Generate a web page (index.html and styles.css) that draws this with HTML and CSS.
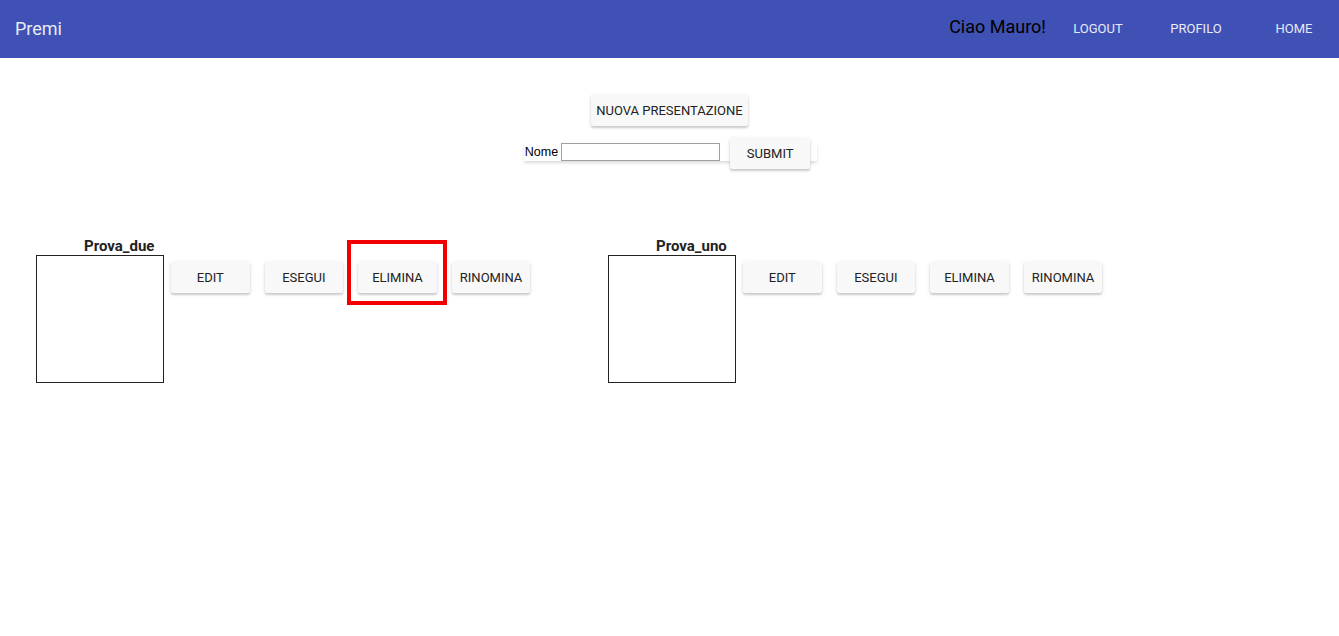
FILE: index.html
```html
<!DOCTYPE html>
<html>
<head>
<meta charset="utf-8">
<link rel="stylesheet" href="styles.css">
</head>
<body>
<header class="topbar">
  <div class="brand">Premi</div>
  <div class="right">
    <span class="greet">Ciao Mauro!</span>
    <button class="navbtn">LOGOUT</button>
    <button class="navbtn">PROFILO</button>
    <button class="navbtn">HOME</button>
  </div>
</header>
<main class="content">
  <div class="center">
    <button class="btn btn-new">NUOVA PRESENTAZIONE</button>
  </div>
  <div class="center formrow">
    <form class="nameform">
      <label class="lbl">Nome</label>
      <input class="inp" type="text">
      <button type="button" class="btn btn-submit">SUBMIT</button>
    </form>
  </div>
  <div class="cards">
    <div class="card">
      <div class="title">Prova_due</div>
      <div class="row">
        <div class="thumb"></div>
        <div class="actions">
          <button class="btn act">EDIT</button>
          <button class="btn act">ESEGUI</button>
          <div class="hl-wrap">
            <button class="btn act">ELIMINA</button>
            <span class="highlight"></span>
          </div>
          <button class="btn act">RINOMINA</button>
        </div>
      </div>
    </div>
    <div class="card">
      <div class="title">Prova_uno</div>
      <div class="row">
        <div class="thumb"></div>
        <div class="actions">
          <button class="btn act">EDIT</button>
          <button class="btn act">ESEGUI</button>
          <button class="btn act">ELIMINA</button>
          <button class="btn act">RINOMINA</button>
        </div>
      </div>
    </div>
  </div>
</main>
</body>
</html>
```
FILE: styles.css
```css
* { box-sizing: border-box; }
body {
  margin: 0;
  font-family: Roboto, "Liberation Sans", sans-serif;
  background: #fff;
}
.topbar {
  height: 58px;
  background: #3f51b5;
  display: flex;
  align-items: center;
  justify-content: space-between;
  padding-left: 15px;
  padding-right: 1px;
}
.brand {
  color: #e8eaf6;
  font-size: 18px;
  margin-top: -1px;
}
.right {
  display: flex;
  align-items: center;
}
.greet {
  font-size: 18px;
  color: #000;
  margin-right: 8px;
  margin-top: -5px;
}
.navbtn {
  width: 88px;
  height: 36px;
  margin-left: 10px;
  background: transparent;
  border: none;
  color: #e8eaf6;
  font-family: Roboto, sans-serif;
  font-size: 13px;
  padding: 0;
  margin-top: -2px;
}
.navbtn:first-of-type { margin-left: 0; }
.content {
  padding-top: 37px;
}
.center {
  display: flex;
  justify-content: center;
}
.btn {
  background: #f8f8f8;
  border: none;
  border-radius: 2px;
  box-shadow: 0 2px 2px rgba(0,0,0,0.14), 0 1px 4px rgba(0,0,0,0.12);
  font-family: Roboto, sans-serif;
  font-size: 13px;
  color: #222;
  height: 31px;
  padding: 0;
}
.btn-new {
  width: 157px;
}
.formrow {
  margin-top: 17px;
}
.nameform {
  display: flex;
  align-items: center;
  height: 18px;
  margin-left: 2px;
  box-shadow: 0 2px 3px rgba(0,0,0,0.14);
  padding-right: 7px;
  padding-left: 1px;
}
.lbl {
  font-family: "Liberation Sans", Arial, sans-serif;
  font-size: 12.5px;
  color: #000;
  margin-right: 3px;
}
.inp {
  width: 159px;
  height: 18px;
  border: 1px solid #a0a0a0;
  padding: 0;
  margin: 0;
}
.btn-submit {
  width: 80px;
  margin-left: 10px;
  margin-top: -4px;
  margin-bottom: -6px;
}
.cards {
  display: flex;
  padding-left: 36px;
  margin-top: 76px;
}
.card {
  width: 572px;
}
.title {
  font-weight: bold;
  font-size: 15px;
  color: #222;
  padding-left: 48px;
  line-height: 18px;
}
.row {
  display: flex;
  align-items: flex-start;
}
.thumb {
  width: 128px;
  height: 128px;
  border: 1px solid #222;
}
.actions {
  display: flex;
  gap: 15px;
  margin-left: 7px;
  margin-top: 7px;
}
.act {
  width: 78.6px;
}
.hl-wrap {
  position: relative;
  display: flex;
}
.highlight {
  position: absolute;
  left: -11px;
  top: -22px;
  width: 100px;
  height: 65px;
  border: 4px solid #f20000;
  pointer-events: none;
}
```
